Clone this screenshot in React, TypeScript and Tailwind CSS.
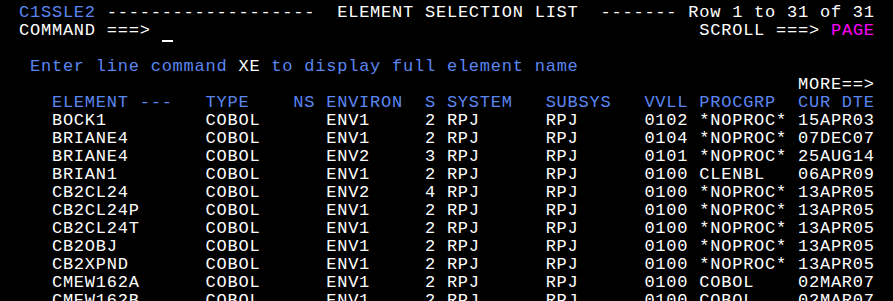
import React from "react";

const pad = (s: string, n: number) => (s.length >= n ? s : s + " ".repeat(n - s.length));

type Row = [string, string, string, string, string, string, string, string, string];

const rows: Row[] = [
  ["BOCK1", "COBOL", "ENV1", "2", "RPJ", "RPJ", "0102", "*NOPROC*", "15APR03"],
  ["BRIANE4", "COBOL", "ENV1", "2", "RPJ", "RPJ", "0104", "*NOPROC*", "07DEC07"],
  ["BRIANE4", "COBOL", "ENV2", "3", "RPJ", "RPJ", "0101", "*NOPROC*", "25AUG14"],
  ["BRIAN1", "COBOL", "ENV1", "2", "RPJ", "RPJ", "0100", "CLENBL", "06APR09"],
  ["CB2CL24", "COBOL", "ENV2", "4", "RPJ", "RPJ", "0100", "*NOPROC*", "13APR05"],
  ["CB2CL24P", "COBOL", "ENV1", "2", "RPJ", "RPJ", "0100", "*NOPROC*", "13APR05"],
  ["CB2CL24T", "COBOL", "ENV1", "2", "RPJ", "RPJ", "0100", "*NOPROC*", "13APR05"],
  ["CB2OBJ", "COBOL", "ENV1", "2", "RPJ", "RPJ", "0100", "*NOPROC*", "13APR05"],
  ["CB2XPND", "COBOL", "ENV1", "2", "RPJ", "RPJ", "0100", "*NOPROC*", "13APR05"],
  ["CMEW162A", "COBOL", "ENV1", "2", "RPJ", "RPJ", "0100", "COBOL", "02MAR07"],
  ["CMEW162B", "COBOL", "ENV1", "2", "RPJ", "RPJ", "0100", "COBOL", "02MAR07"],
];

// column starts: 3,17,28,37,39,48,57,62,71
const fmt = (r: string[]) =>
  "   " +
  pad(r[0], 14) +
  pad(r[1], 11) +
  pad(r[2], 9) +
  pad(r[3], 2) +
  pad(r[4], 9) +
  pad(r[5], 9) +
  pad(r[6], 5) +
  pad(r[7], 9) +
  r[8];

const Line = ({ children }: { children?: React.ReactNode }) => (
  <div className="h-[18px] leading-[18px] whitespace-pre">{children}</div>
);

export default function App() {
  return (
    <div className="h-[301px] w-[893px] overflow-hidden bg-black">
      <div
        className="pt-[4px] pl-[19px] text-[17px] tracking-[0.77px] text-white"
        style={{ fontFamily: '"Liberation Mono", "DejaVu Sans Mono", monospace' }}
      >
        <Line>
          <span className="text-[#5b86f0]">C1SSLE2</span>
          <span>{" -------------------  ELEMENT SELECTION LIST  ------- Row 1 to 31 of 31"}</span>
        </Line>
        <Line>
          <span>{"COMMAND ===> "}</span>
          <span className="relative inline-block">
            {" "}
            <span className="absolute left-0 top-[18px] h-[2px] w-[11px] bg-white" />
          </span>
          <span>{" ".repeat(48)}</span>
          <span>{"SCROLL ===> "}</span>
          <span className="text-[#ff00ff]">PAGE</span>
        </Line>
        <Line />
        <Line>
          <span className="text-[#5b86f0]">{" Enter line command "}</span>
          <span>XE</span>
          <span className="text-[#5b86f0]">{" to display full element name"}</span>
        </Line>
        <Line>{" ".repeat(71) + "MORE==>"}</Line>
        <Line>
          <span className="text-[#5b86f0]">
            {"   ELEMENT ---   TYPE    NS ENVIRON  S SYSTEM   SUBSYS   VVLL PROCGRP  CUR DTE"}
          </span>
        </Line>
        {rows.map((r, i) => (
          <Line key={i}>{fmt(r)}</Line>
        ))}
      </div>
    </div>
  );
}
